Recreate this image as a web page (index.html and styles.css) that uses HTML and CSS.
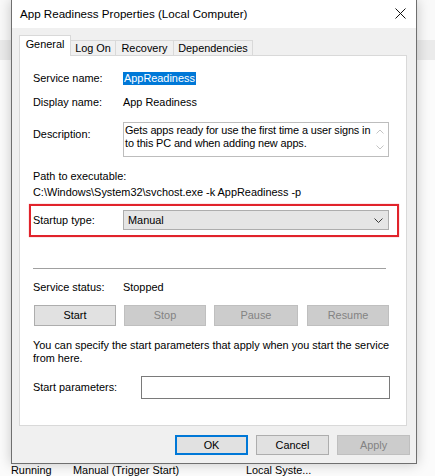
FILE: index.html
```html
<!DOCTYPE html>
<html lang="en">
<head>
<meta charset="utf-8">
<title>App Readiness Properties (Local Computer)</title>
<link rel="stylesheet" href="styles.css">
</head>
<body>
<div class="window">
  <div class="titlebar">
    <span class="title">App Readiness Properties (Local Computer)</span>
    <svg class="close" width="11" height="11" viewBox="0 0 11 11"><path d="M0.5 0.5 L10.5 10.5 M10.5 0.5 L0.5 10.5" stroke="#111" stroke-width="1" fill="none"/></svg>
  </div>
  <div class="client">
    <div class="tabs">
      <div class="tab tab-general active">General</div>
      <div class="tab tab-logon">Log On</div>
      <div class="tab tab-recovery">Recovery</div>
      <div class="tab tab-deps">Dependencies</div>
    </div>
    <div class="panel">
      <div class="row first">
        <span class="label">Service name:</span>
        <span class="sel">AppReadiness</span>
      </div>
      <div class="row gap11">
        <span class="label">Display name:</span>
        <span>App Readiness</span>
      </div>
      <div class="desc-row">
        <span class="label desc-label">Description:</span>
        <div class="desc-box">
          <div class="desc-text">Gets apps ready for use the first time a user signs in<br>to this PC and when adding new apps.</div>
          <div class="desc-scroll">
            <svg width="8" height="5" viewBox="0 0 8 5"><path d="M0.5 4.5 L4 1 L7.5 4.5" stroke="#c4c4c4" fill="none"/></svg>
            <svg width="8" height="5" viewBox="0 0 8 5"><path d="M0.5 0.5 L4 4 L7.5 0.5" stroke="#c4c4c4" fill="none"/></svg>
          </div>
        </div>
      </div>
      <div class="line path-label">Path to executable:</div>
      <div class="line path-value">C:\Windows\System32\svchost.exe -k AppReadiness -p</div>
      <div class="highlight">
        <span class="label">Startup type:</span>
        <div class="combo">
          <span class="combo-text">Manual</span>
          <svg width="9" height="5" viewBox="0 0 9 5"><path d="M0.5 0.5 L4.5 4.5 L8.5 0.5" stroke="#3a3a3a" fill="none"/></svg>
        </div>
      </div>
      <div class="separator"></div>
      <div class="row status">
        <span class="label">Service status:</span>
        <span>Stopped</span>
      </div>
      <div class="svc-buttons">
        <div class="btn btn-start">Start</div>
        <div class="btn btn-stop disabled">Stop</div>
        <div class="btn btn-pause disabled">Pause</div>
        <div class="btn btn-resume disabled">Resume</div>
      </div>
      <p class="note">You can specify the start parameters that apply when you start the service<br>from here.</p>
      <div class="params-row">
        <span class="label params-label">Start parameters:</span>
        <div class="input"></div>
      </div>
    </div>
    <div class="actions">
      <div class="btn dlg ok">OK</div>
      <div class="btn dlg">Cancel</div>
      <div class="btn dlg disabled">Apply</div>
    </div>
  </div>
</div>
<div class="bg-row">
  <span class="bg-status">Running</span>
  <span class="bg-startup">Manual (Trigger Start)</span>
  <span>Local Syste...</span>
</div>
</body>
</html>
```
FILE: styles.css
```css
* { box-sizing: border-box; }
html, body { margin: 0; padding: 0; }
body {
  width: 435px;
  height: 476px;
  overflow: hidden;
  background: linear-gradient(to bottom, #f9f9f9 0, #f9f9f9 40px, #ebebeb 40px, #ebebeb 60px, #fbfbfb 60px);
  font-family: "Segoe UI", "Liberation Sans", Arial, sans-serif;
  font-size: 10.9px;
  line-height: 13px;
  color: #000;
}
.window {
  margin-left: 11px;
  width: 406px;
  height: 464px;
  border: 1px solid #6f6f6f;
  border-top: none;
  background: #f0f0f0;
  box-shadow: 0 0 12px rgba(0, 0, 0, 0.22);
  display: flex;
  flex-direction: column;
}
.titlebar {
  height: 28px;
  flex: none;
  background: #fff;
  display: flex;
  align-items: center;
  padding-left: 8px;
  padding-right: 10px;
}
.title {
  flex: 1;
  font-size: 11.6px;
  padding-bottom: 2px;
}
.close { flex: none; margin-bottom: 2px; }
.client {
  flex: 1;
  display: flex;
  flex-direction: column;
  padding-top: 7px;
}
.tabs {
  display: flex;
  align-items: flex-end;
  height: 20px;
  margin-left: 7px;
  position: relative;
  z-index: 1;
}
.tab {
  height: 15px;
  border: 1px solid #d9d9d9;
  border-left: none;
  border-bottom: none;
  background: #f0f0f0;
  text-align: center;
  line-height: 14px;
}
.tab.active {
  height: 21px;
  margin-bottom: -1px;
  background: #fff;
  border-left: 1px solid #d9d9d9;
  line-height: 17px;
}
.tab-general { width: 52px; }
.tab-logon { width: 45px; }
.tab-recovery { width: 58px; }
.tab-deps { width: 79px; }
.panel {
  margin-left: 7px;
  width: 388px;
  height: 371px;
  background: #fff;
  border: 1px solid #d9d9d9;
  padding: 16px 0 0 13px;
}
.row {
  display: flex;
  height: 13px;
}
.gap11 { margin-top: 11px; }
.label { width: 90px; flex: none; }
.sel {
  background: #0078d7;
  color: #fff;
  padding: 0 1px;
}
.desc-row {
  display: flex;
  margin-top: 13px;
}
.desc-label { padding-top: 6px; }
.desc-box {
  width: 266px;
  height: 35px;
  border: 1px solid #bdbdbd;
  display: flex;
}
.desc-text {
  flex: 1;
  min-width: 0;
  padding: 1px 0 0 1px;
  white-space: nowrap;
  letter-spacing: -0.12px;
}
.desc-scroll {
  flex: none;
  width: 17px;
  display: flex;
  flex-direction: column;
  align-items: center;
  justify-content: space-between;
  padding: 6px 0 6px;
}
.line { height: 13px; white-space: nowrap; }
.path-label { margin-top: 13px; }
.path-value { margin-top: 3px; }
.highlight {
  margin-top: 5px;
  margin-left: -4px;
  width: 370px;
  border: 2px solid #e1232b;
  box-shadow: 0 0 1px rgba(225, 35, 43, 0.6);
  padding: 4px 0 5px 2px;
  display: flex;
  align-items: center;
}
.combo {
  width: 266px;
  height: 20px;
  background: #e5e5e5;
  border: 1px solid #adadad;
  display: flex;
  align-items: center;
  padding: 0 5px 0 4px;
}
.combo-text { flex: 1; }
.separator {
  margin-top: 31px;
  width: 353px;
  height: 1px;
  background: #a0a0a0;
}
.status { margin-top: 12px; }
.svc-buttons {
  display: flex;
  margin-top: 11px;
  margin-left: 1px;
  height: 21px;
}
.btn {
  height: 21px;
  background: #e1e1e1;
  border: 1px solid #adadad;
  display: flex;
  align-items: center;
  justify-content: center;
}
.btn.disabled {
  background: #cccccc;
  border-color: #bfbfbf;
  color: #838383;
}
.btn-start { width: 82px; }
.btn-stop { width: 82px; margin-left: 8px; }
.btn-pause { width: 84px; margin-left: 8px; }
.btn-resume { width: 82px; margin-left: 9px; }
.note {
  margin: 13px 0 0;
  white-space: nowrap;
}
.params-row {
  display: flex;
  align-items: center;
  margin-top: 11px;
}
.params-label { width: 108px; }
.input {
  width: 249px;
  height: 23px;
  background: #fff;
  border: 1px solid #7a7a7a;
}
.actions {
  display: flex;
  justify-content: flex-end;
  gap: 8px;
  margin-top: 9px;
  padding-right: 6px;
}
.btn.dlg { width: 73px; height: 20px; }
.btn.ok { border: 2px solid #0078d7; }
.bg-row {
  display: flex;
  height: 13px;
  padding-left: 11px;
  white-space: nowrap;
}
.bg-status { width: 62px; }
.bg-startup { width: 173px; }
```
